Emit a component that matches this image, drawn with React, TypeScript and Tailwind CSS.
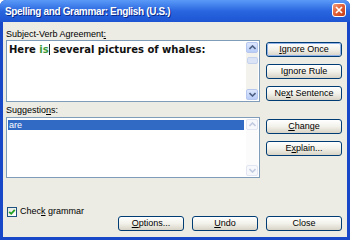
import React from "react";

const ui = "font-['Liberation_Sans','Arial',sans-serif] text-[9px] text-black";

function XpButton({
  children,
  className = "",
  isDefault = false,
}: {
  children: React.ReactNode;
  className?: string;
  isDefault?: boolean;
}) {
  return (
    <div
      className={`flex h-[15px] items-center justify-center rounded-[3px] border border-[#003c74] bg-gradient-to-b from-white via-[#f2f1ea] to-[#d8d3c6] ${className}`}
    >
      <div
        className={`flex h-full w-full items-center justify-center rounded-[2px] leading-none ${
          isDefault ? "border border-[#8fb1e8]" : ""
        }`}
      >
        {children}
      </div>
    </div>
  );
}

function Arrow({ up, faded = false }: { up: boolean; faded?: boolean }) {
  return (
    <svg width="7" height="5" viewBox="0 0 7 5">
      <path
        d={up ? "M0.5 4 L3.5 1 L6.5 4" : "M0.5 1 L3.5 4 L6.5 1"}
        fill="none"
        stroke={faded ? "#c2cbe0" : "#4d6185"}
        strokeWidth="1.6"
      />
    </svg>
  );
}

function ScrollBar({ disabled = false }: { disabled?: boolean }) {
  const btn = disabled
    ? "border-[#e1e6f2] bg-[#f7f8fc]"
    : "border-[#b6c7ef] bg-gradient-to-b from-[#dde7fd] to-[#b9cdf7]";
  return (
    <div
      className={`flex h-full w-[12px] flex-col ${disabled ? "bg-[#fbfbfb]" : "bg-[#f3f2ec]"}`}
    >
      <div className={`flex h-[11px] items-center justify-center rounded-[2px] border ${btn}`}>
        <Arrow up faded={disabled} />
      </div>
      <div className="flex-1 pt-[4px]">
        {!disabled && (
          <div className="mx-auto h-[7px] w-[11px] rounded-[2px] border border-[#c6d3ef] bg-[#dbe3f6]" />
        )}
      </div>
      <div className={`flex h-[11px] items-center justify-center rounded-[2px] border ${btn}`}>
        <Arrow up={false} faded={disabled} />
      </div>
    </div>
  );
}

export default function App() {
  return (
    <div className="flex h-[240px] w-[350px] flex-col overflow-hidden rounded-t-[6px] bg-[#1848c8]">
      {/* Title bar */}
      <div className="flex h-[22px] items-center justify-between bg-gradient-to-b from-[#5b9af7] via-[#2a66e0] to-[#1d54d2] pl-[5px] pr-[4px]">
        <span className="font-['Liberation_Sans','Arial',sans-serif] text-[10px] font-bold tracking-[-0.35px] text-white [text-shadow:1px_1px_0_#0a2a8a]">
          Spelling and Grammar: English (U.S.)
        </span>
        <div className="mb-[3px] flex h-[14px] w-[14px] items-center justify-center rounded-[3px] border border-white bg-gradient-to-br from-[#f09a77] via-[#e05d35] to-[#c23c14]">
          <svg width="8" height="8" viewBox="0 0 8 8">
            <path d="M1 1 L7 7 M7 1 L1 7" stroke="white" strokeWidth="1.7" />
          </svg>
        </div>
      </div>

      {/* Body */}
      <div className={`mx-[3px] mb-[3px] flex flex-1 flex-col bg-[#ecebe4] pl-[3px] pr-[5px] pt-[6px] ${ui}`}>
        <div className="flex gap-[6px]">
          {/* Left column */}
          <div className="flex w-[254px] flex-col">
            <div className="h-[12px] leading-[12px]">
              Subject-Verb Agreement<span className="underline">:</span>
            </div>
            <div className="flex h-[62px] border border-[#7f9db9] bg-white">
              <div className="flex-1 pl-[2px] pt-[3px] font-['DejaVu_Sans',sans-serif] text-[10px] font-bold leading-[12px] text-[#111]">
                Here <span className="border-r border-[#222] text-[#3a9a3a]">is</span> several pictures of whales:
              </div>
              <div className="py-[1px] pr-[1px]">
                <ScrollBar />
              </div>
            </div>
            <div className="h-[15px] pt-[1px] leading-[14px]">
              Suggestio<span className="underline">n</span>s:
            </div>
            <div className="flex h-[61px] border border-[#7f9db9] bg-white p-[1px]">
              <div className="flex-1 pr-[2px] pt-[1px]">
                <div className="h-[10px] bg-[#316ac5] pl-[1px] leading-[10px] text-white">are</div>
              </div>
              <ScrollBar disabled />
            </div>
          </div>

          {/* Right column */}
          <div className="flex w-[76px] flex-col">
            <XpButton className="mt-[14px]" isDefault>
              <span className="underline">I</span>gnore Once
            </XpButton>
            <XpButton className="mt-[7px]">
              I<span className="underline">g</span>nore Rule
            </XpButton>
            <XpButton className="mt-[7px]">
              Ne<span className="underline">x</span>t Sentence
            </XpButton>
            <XpButton className="mt-[18px]">
              <span className="underline">C</span>hange
            </XpButton>
            <XpButton className="mt-[7px]">
              E<span className="underline">x</span>plain...
            </XpButton>
          </div>
        </div>

        {/* Bottom */}
        <div className="mt-[27px] flex h-[26px] items-end">
          <div className="flex h-[12px] flex-1 items-center gap-[3px] self-start pl-[1px] pt-[1px]">
            <div className="flex h-[10px] w-[10px] items-center justify-center border border-[#1c5180] bg-gradient-to-br from-[#e6e6df] to-white">
              <svg width="8" height="8" viewBox="0 0 8 8">
                <path d="M1.2 3.8 L3.2 5.8 L6.8 1.8" fill="none" stroke="#21a121" strokeWidth="1.8" />
              </svg>
            </div>
            <span className="leading-none">
              Chec<span className="underline">k</span> grammar
            </span>
          </div>
          <div className="flex gap-[8px]">
            <XpButton className="w-[66px]">
              <span className="underline">O</span>ptions...
            </XpButton>
            <XpButton className="w-[66px]">
              <span className="underline">U</span>ndo
            </XpButton>
            <XpButton className="w-[76px]">Close</XpButton>
          </div>
        </div>
      </div>
    </div>
  );
}
